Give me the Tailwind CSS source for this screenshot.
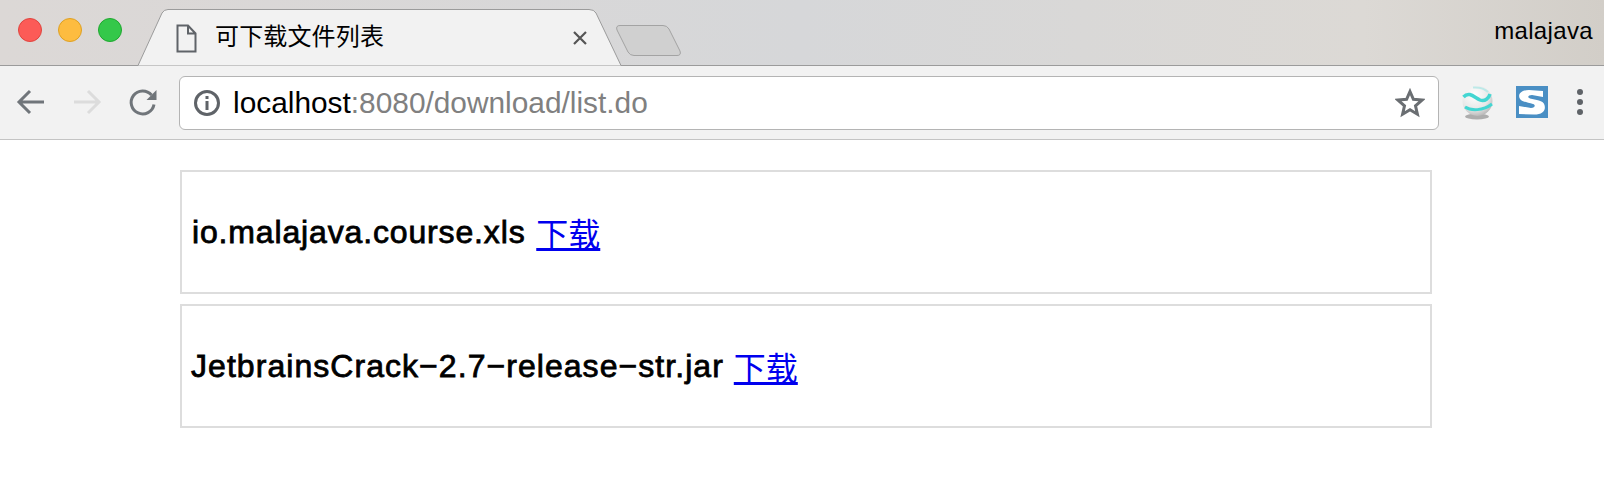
<!DOCTYPE html>
<html lang="en">

<head>
    <meta charset="UTF-8" />
    <title>可下载文件列表</title>
    <script src="https://cdn.jsdelivr.net/npm/@tailwindcss/browser@4"></script>
</head>

<body class="bg-white font-['Liberation_Sans','Noto_Sans_CJK_SC',sans-serif] text-black overflow-hidden">
    <!-- TAB STRIP -->
    <div class="relative h-[66px] border-b border-[#9b9b9b] bg-[linear-gradient(90deg,#dcd8d6_0%,#d6d7d9_50%,#dcd9d5_85%,#d2cec8_100%)] flex items-start">
        <!-- traffic lights -->
        <div class="flex gap-[16px] pl-[18px] pt-[18px]">
            <span class="size-6 rounded-full bg-[#fc5b57] border border-[#e0443e]"></span>
            <span class="size-6 rounded-full bg-[#fdbc40] border border-[#dea123]"></span>
            <span class="size-6 rounded-full bg-[#34c84a] border border-[#1fa82f]"></span>
        </div>

        <!-- tab and new tab shapes -->
        <svg class="absolute left-0 top-0" width="700" height="66" viewBox="0 0 700 66" fill="none">
            <path d="M138 65.5 L162 13 Q164 9.5 168 9.5 L589 9.5 Q594 9.5 596 13 L621 65.5 Z" fill="#f2f2f2" />
            <path d="M138 65.5 L162 13 Q164 9.5 168 9.5 L589 9.5 Q594 9.5 596 13 L621 65.5" stroke="#9b9b9b" stroke-width="1" />
            <path d="M620 25.5 L663 25.5 Q667 25.5 669 29 L680 51 Q681.500 55.500 677 55.500 L634 55.500 Q630 55.500 628 52 L617 30 Q615.500 25.500 620 25.500 Z" fill="#d0d0d0" stroke="#a3a3a3" />
        </svg>

        <!-- page icon -->
        <svg class="absolute left-[176px] top-[24px]" width="21" height="29" viewBox="0 0 21 29" fill="none" stroke="#5f6368" stroke-width="2">
            <path d="M1.500 1.500 H12 L19.500 9.500 V27.500 H1.500 Z M12 1.500 V9.500 H19.500" />
        </svg>

        <span class="absolute left-[215px] top-[19px] text-[24px] leading-[36px] tracking-[0.15px]">可下载文件列表</span>

        <!-- close -->
        <svg class="absolute left-[572px] top-[30px]" width="16" height="16" viewBox="0 0 16 16" stroke="#555" stroke-width="2.200">
            <path d="M2 2 L14 14 M14 2 L2 14" />
        </svg>

        <span class="absolute right-[11px] top-[15px] text-[24px] leading-[32px] tracking-[0.35px]">malajava</span>
    </div>

    <!-- TOOLBAR -->
    <div class="h-[74px] bg-[#f2f2f2] border-b border-[#c4c4c4] flex items-center">
        <div class="flex items-center w-[179px] h-full shrink-0 relative">
            <svg class="absolute left-[15px] top-[22px]" width="32" height="28" viewBox="0 0 32 28" fill="none" stroke="#70757a" stroke-width="3">
                <path d="M29 14 H4 M15 3 L4 14 L15 25" />
            </svg>
            <svg class="absolute left-[71px] top-[22px]" width="32" height="28" viewBox="0 0 32 28" fill="none" stroke="#dcdcdc" stroke-width="3">
                <path d="M3 14 H28 M17 3 L28 14 L17 25" />
            </svg>
            <svg class="absolute left-[127px] top-[21px]" width="32" height="30" viewBox="0 0 32 30" fill="none">
                <path d="M24.500 8 A11.500 11.500 0 1 0 27 17.500" stroke="#70757a" stroke-width="3" />
                <path d="M29.500 3 V13 H19.500 Z" fill="#70757a" />
            </svg>
        </div>

        <!-- address bar -->
        <div class="h-[54px] w-[1260px] shrink-0 bg-white border border-[#b4b4b4] rounded-[6px] flex items-center relative">
            <svg class="ml-[13px] shrink-0" width="28" height="28" viewBox="0 0 28 28" fill="none">
                <circle cx="14" cy="14" r="11.500" stroke="#5f6368" stroke-width="3" />
                <rect x="12.500" y="7" width="3" height="3" fill="#5f6368" />
                <rect x="12.500" y="12" width="3" height="9" fill="#5f6368" />
            </svg>
            <span class="ml-[12px] text-[29.850px] leading-[40px] whitespace-nowrap">localhost<span class="text-[#808080]">:8080/download/list.do</span></span>
            <svg class="absolute right-[13px] top-[11px]" width="30" height="30" viewBox="0 0 30 30" fill="none" stroke="#6a6e72" stroke-width="3">
                <path d="M15 3.500 L18.400 11.300 L27 12.100 L20.500 17.800 L22.400 26.200 L15 21.800 L7.600 26.200 L9.500 17.800 L3 12.100 L11.600 11.300 Z" stroke-linejoin="miter" />
            </svg>
        </div>

        <!-- extensions -->
        <div class="relative flex-1 h-full">
            <svg class="absolute left-[22px] top-[20px]" width="34" height="34" viewBox="0 0 34 34" fill="none">
                <defs>
                    <radialGradient id="ball" cx="0.4" cy="0.3" r="0.8">
                        <stop offset="0" stop-color="#ffffff" />
                        <stop offset="0.6" stop-color="#e8e8e8" />
                        <stop offset="1" stop-color="#a8a8a8" />
                    </radialGradient>
                </defs>
                <ellipse cx="16" cy="30.500" rx="12" ry="3" fill="#adadad" />
                <circle cx="16.500" cy="15" r="15" fill="url(#ball)" />
                <path d="M2.500 11 C8 5 13 11 19 14 C24 16 28 12 29 8" stroke="#43d6d2" stroke-width="3.500" />
                <path d="M4 21 C10 25 22 25 31 18" stroke="#43d6d2" stroke-width="3" />
                <path d="M12 1.500 C18 1 24 3 27 6" stroke="#bde9e8" stroke-width="2" />
            </svg>
            <svg class="absolute left-[77px] top-[20px]" width="32" height="32" viewBox="0 0 32 32">
                <rect width="32" height="32" fill="#4a8fc4" />
                <path d="M27 5 L13 4 C5 4 2 8 3.500 12 C5 16 11 16 17 18 C20 19 19 22 15 22 L3 20 L3 28 L18 28.500 C27 28.500 30 24 28.500 19 C27 14 20 14 14 12.500 C11 11.500 12 9 16 9 L27 11 Z" fill="#fff" />
            </svg>
            <div class="absolute left-[138px] top-[23px] flex flex-col gap-[4px]">
                <span class="size-[6px] rounded-full bg-[#5f6368]"></span>
                <span class="size-[6px] rounded-full bg-[#5f6368]"></span>
                <span class="size-[6px] rounded-full bg-[#5f6368]"></span>
            </div>
        </div>
    </div>

    <!-- FILE LIST -->
    <div class="ml-[180px] w-[1252px] pt-[30px] flex flex-col gap-[10px]">
        <div class="h-[124px] border-2 border-[#dddddd] flex items-center pl-[10px] text-[32px] whitespace-pre"><span class="tracking-[0.85px] [-webkit-text-stroke:0.8px_black]">io.malajava.course.xls </span><a href="#" class="ml-[1px] font-['Noto_Sans_CJK_SC',sans-serif] text-[#0000ee] underline">下载</a></div>
        <div class="h-[124px] border-2 border-[#dddddd] flex items-center pl-[9px] text-[32px] whitespace-pre"><span class="tracking-[1.05px] [-webkit-text-stroke:0.8px_black]">JetbrainsCrack−2.7−release−str.jar </span><a href="#" class="font-['Noto_Sans_CJK_SC',sans-serif] text-[#0000ee] underline">下载</a></div>
    </div>
</body>

</html>
